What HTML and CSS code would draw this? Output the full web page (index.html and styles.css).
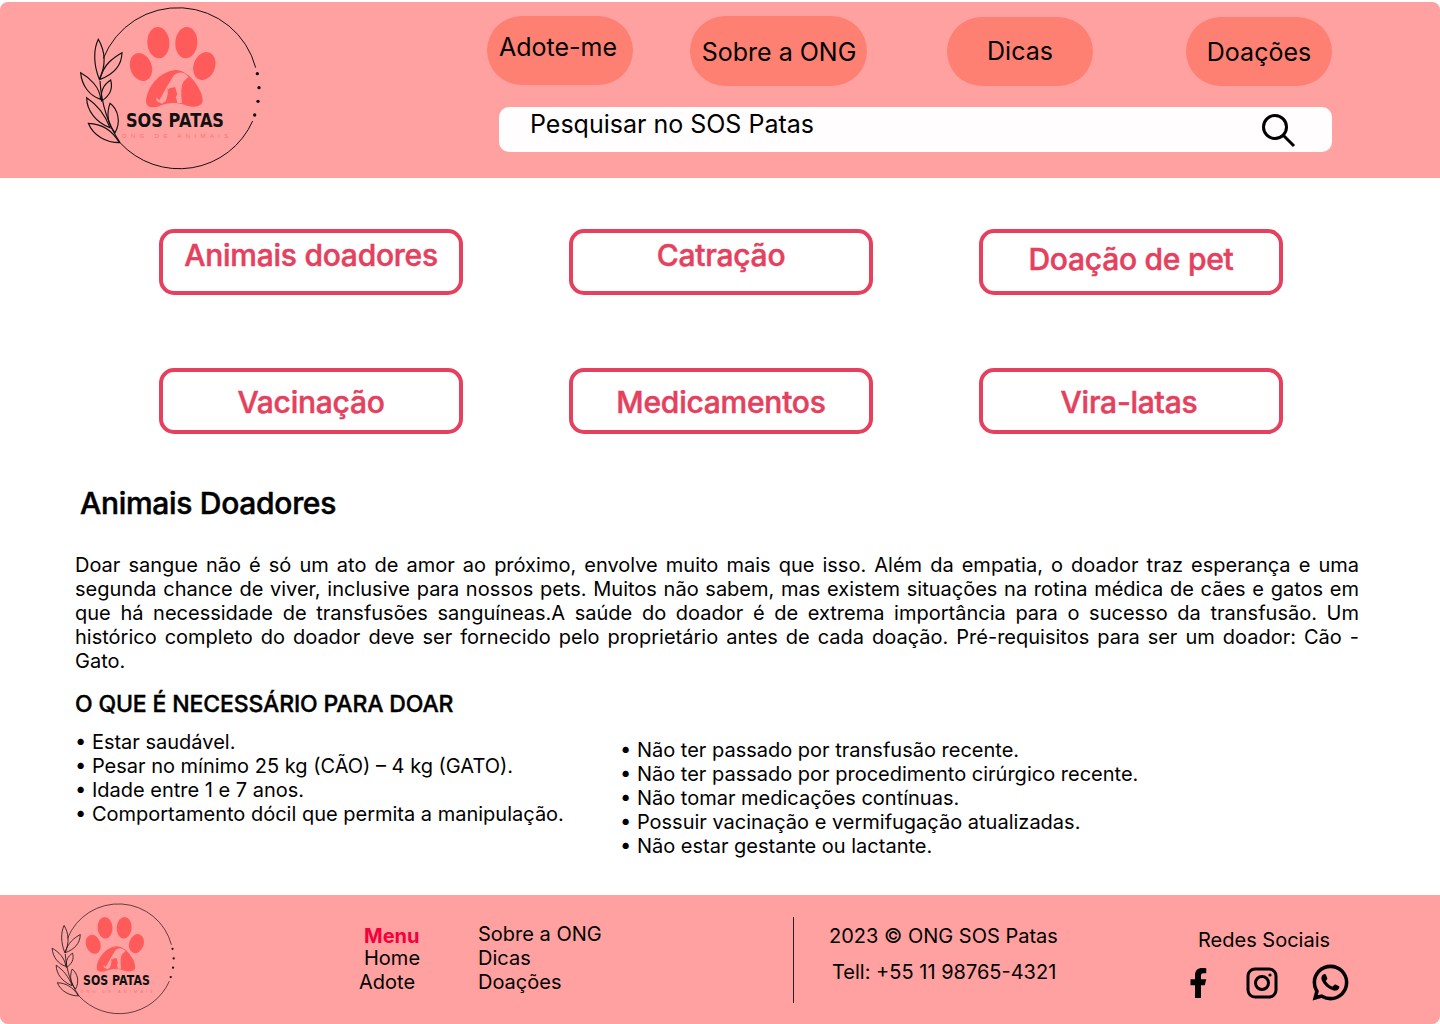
FILE: index.html
```html
<!DOCTYPE html>
<html lang="pt-BR">
<head>
    <meta charset="utf-8">
    <title>SOS Patas</title>
    <link rel="stylesheet" href="styles.css">
</head>
<body>
    <header class="topo">
        <svg class="logo" viewBox="0 3 660 528">
            <g fill="none" stroke="#111" stroke-width="3">
                <path d="M587 200A241 241 0 0 0 130 172"/>
                <path d="M180 425A241 241 0 0 0 578 360"/>
            </g>
            <g fill="#111">
                <circle cx="592" cy="218" r="5"/>
                <circle cx="597" cy="260" r="5"/>
                <circle cx="594" cy="301" r="5"/>
                <circle cx="584" cy="342" r="5"/>
            </g>
            <g fill="none" stroke="#111" stroke-width="3.5">
                <path d="M180 425C150 380 125 320 120 240"/>
                <path d="M118 235C100 190 100 145 115 115C135 150 140 190 118 235Z"/>
                <path d="M120 235C130 190 160 170 186 155C185 195 160 220 120 235Z"/>
                <path d="M125 300C120 270 132 250 152 237C160 265 148 285 125 300Z"/>
                <path d="M122 295C120 260 90 230 62 215C65 255 90 285 122 295Z"/>
                <path d="M150 380C135 340 110 310 80 290C80 330 110 365 150 380Z"/>
                <path d="M165 395C140 365 140 335 150 307C175 325 183 365 165 395Z"/>
                <path d="M178 425C155 385 120 368 85 367C100 405 140 425 178 425Z"/>
            </g>
            <g fill="#ff5b5b">
                <ellipse cx="295" cy="125" rx="33" ry="47" transform="rotate(-4 295 125)"/>
                <ellipse cx="379" cy="125" rx="33" ry="47" transform="rotate(4 379 125)"/>
                <ellipse cx="243" cy="198" rx="32" ry="43" transform="rotate(-20 243 198)"/>
                <ellipse cx="433" cy="195" rx="32" ry="43" transform="rotate(20 433 195)"/>
                <path d="M258 300C262 255 300 212 345 207C385 205 428 265 428 298C428 318 400 322 375 312C350 304 325 304 300 314C278 323 258 320 258 300Z"/>
            </g>
            <path fill="#ffa1a1" d="M336 232C345 212 372 208 385 228L372 240C364 250 362 270 366 306H345L340 300L352 280L345 258L328 262L318 300L305 308L290 300L288 288L298 298L318 262Z"/>
            <path fill="#ff5b5b" d="M322 262L329 268H340L347 262L346 280L352 306H316L324 282Z"/>
            <text class="logo-name" x="198" y="379" textLength="294" lengthAdjust="spacingAndGlyphs">SOS PATAS</text>
            <text class="logo-sub" x="186" y="411" textLength="319">ONG DE ANIMAIS</text>
        </svg>
        <div class="topo-direita">
            <nav class="menu">
                <a class="pill pill-adote" href="#">Adote-me</a>
                <a class="pill pill-sobre" href="#">Sobre a ONG</a>
                <a class="pill pill-dicas" href="#">Dicas</a>
                <a class="pill pill-doacoes" href="#">Doações</a>
            </nav>
            <div class="busca">
                <span>Pesquisar no SOS Patas</span>
                <svg class="busca-icone" width="36" height="36" viewBox="0 0 36 36">
                    <circle cx="15" cy="14" r="11.5" fill="none" stroke="#000" stroke-width="3"/>
                    <path d="M23 22L34 33" stroke="#000" stroke-width="3" fill="none"/>
                </svg>
            </div>
        </div>
    </header>

    <section class="botoes">
        <a class="botao sobe" href="#">Animais doadores</a>
        <a class="botao sobe" href="#">Catração</a>
        <a class="botao meio" href="#">Doação de pet</a>
        <a class="botao desce" href="#">Vacinação</a>
        <a class="botao desce" href="#">Medicamentos</a>
        <a class="botao desce vira" href="#">Vira-latas</a>
    </section>

    <main class="conteudo">
        <h1>Animais Doadores</h1>
        <p class="texto">Doar sangue não é só um ato de amor ao próximo, envolve muito mais que isso. Além da empatia, o doador traz esperança e uma segunda chance de viver, inclusive para nossos pets. Muitos não sabem, mas existem situações na rotina médica de cães e gatos em que há necessidade de transfusões sanguíneas.A saúde do doador é de extrema importância para o sucesso da transfusão. Um histórico completo do doador deve ser fornecido pelo proprietário antes de cada doação. Pré-requisitos para ser um doador: Cão - Gato.</p>
        <h2>O QUE É NECESSÁRIO PARA DOAR</h2>
        <div class="listas">
            <ul class="lista lista-um">
                <li>• Estar saudável.</li>
                <li>• Pesar no mínimo 25 kg (CÃO) – 4 kg (GATO).</li>
                <li>• Idade entre 1 e 7 anos.</li>
                <li>• Comportamento dócil que permita a manipulação.</li>
            </ul>
            <ul class="lista lista-dois">
                <li>• Não ter passado por transfusão recente.</li>
                <li>• Não ter passado por procedimento cirúrgico recente.</li>
                <li>• Não tomar medicações contínuas.</li>
                <li>• Possuir vacinação e vermifugação atualizadas.</li>
                <li>• Não estar gestante ou lactante.</li>
            </ul>
        </div>
    </main>

    <footer class="rodape">
        <svg class="logo-rodape" viewBox="0 3 660 528">
            <g fill="none" stroke="#111" stroke-width="3">
                <path d="M587 200A241 241 0 0 0 130 172"/>
                <path d="M180 425A241 241 0 0 0 578 360"/>
            </g>
            <g fill="#111">
                <circle cx="592" cy="218" r="5"/>
                <circle cx="597" cy="260" r="5"/>
                <circle cx="594" cy="301" r="5"/>
                <circle cx="584" cy="342" r="5"/>
            </g>
            <g fill="none" stroke="#111" stroke-width="3.5">
                <path d="M180 425C150 380 125 320 120 240"/>
                <path d="M118 235C100 190 100 145 115 115C135 150 140 190 118 235Z"/>
                <path d="M120 235C130 190 160 170 186 155C185 195 160 220 120 235Z"/>
                <path d="M125 300C120 270 132 250 152 237C160 265 148 285 125 300Z"/>
                <path d="M122 295C120 260 90 230 62 215C65 255 90 285 122 295Z"/>
                <path d="M150 380C135 340 110 310 80 290C80 330 110 365 150 380Z"/>
                <path d="M165 395C140 365 140 335 150 307C175 325 183 365 165 395Z"/>
                <path d="M178 425C155 385 120 368 85 367C100 405 140 425 178 425Z"/>
            </g>
            <g fill="#ff5b5b">
                <ellipse cx="295" cy="125" rx="33" ry="47" transform="rotate(-4 295 125)"/>
                <ellipse cx="379" cy="125" rx="33" ry="47" transform="rotate(4 379 125)"/>
                <ellipse cx="243" cy="198" rx="32" ry="43" transform="rotate(-20 243 198)"/>
                <ellipse cx="433" cy="195" rx="32" ry="43" transform="rotate(20 433 195)"/>
                <path d="M258 300C262 255 300 212 345 207C385 205 428 265 428 298C428 318 400 322 375 312C350 304 325 304 300 314C278 323 258 320 258 300Z"/>
            </g>
            <path fill="#ffa1a1" d="M336 232C345 212 372 208 385 228L372 240C364 250 362 270 366 306H345L340 300L352 280L345 258L328 262L318 300L305 308L290 300L288 288L298 298L318 262Z"/>
            <path fill="#ff5b5b" d="M322 262L329 268H340L347 262L346 280L352 306H316L324 282Z"/>
            <text class="logo-name" x="198" y="379" textLength="294" lengthAdjust="spacingAndGlyphs">SOS PATAS</text>
            <text class="logo-sub" x="186" y="411" textLength="319">ONG DE ANIMAIS</text>
        </svg>
        <div class="rodape-menu">
            <strong class="menu-titulo">Menu</strong>
            <a class="menu-home" href="#">Home</a>
            <a class="menu-adote" href="#">Adote</a>
        </div>
        <div class="rodape-links">
            <a href="#">Sobre a ONG</a>
            <a href="#">Dicas</a>
            <a href="#">Doações</a>
        </div>
        <div class="divisor"></div>
        <div class="contato">
            <span>2023 © ONG SOS Patas</span>
            <span class="telefone">Tell: +55 11 98765-4321</span>
        </div>
        <div class="redes">
            <span>Redes Sociais</span>
            <div class="redes-icones">
                <svg width="36" height="36" viewBox="0 0 24 24"><path d="M14 13.5h2.5l1-4H14v-2c0-1.03 0-2 2-2h1.5V2.14c-.326-.043-1.557-.14-2.857-.14C11.928 2 10 3.657 10 6.7v2.8H7v4h3V22h4v-8.5z"/></svg>
                <svg width="32" height="32" viewBox="0 0 32 32" fill="none" stroke="#000" stroke-width="3"><rect x="2" y="2" width="28" height="28" rx="7"/><circle cx="16" cy="16" r="6.5"/><circle cx="24" cy="8" r="1.6" fill="#000" stroke="none"/></svg>
                <svg class="icone-zap" width="43" height="43" viewBox="0 0 24 24"><path d="M7.253 18.494l.724.423A7.953 7.953 0 0 0 12 20a8 8 0 1 0-8-8c0 1.436.377 2.813 1.084 4.024l.422.724-.653 2.401 2.4-.655zM2.004 22l1.352-4.968A9.954 9.954 0 0 1 2 12C2 6.477 6.477 2 12 2s10 4.477 10 10-4.477 10-10 10a9.954 9.954 0 0 1-5.03-1.355L2.004 22zM8.391 7.308c.134-.01.269-.01.403-.004.054.004.108.01.162.016.159.018.334.115.393.249.298.676.588 1.357.868 2.04.062.152.025.347-.093.537a4.38 4.38 0 0 1-.263.372c-.113.145-.356.411-.356.411s-.099.118-.061.265c.014.056.06.137.102.205l.059.095c.256.427.6.86 1.02 1.268.12.116.237.235.363.346.468.413.998.75 1.57 1l.005.002c.085.037.128.057.252.11.062.026.126.049.191.066a.35.35 0 0 0 .367-.13c.724-.877.79-.934.796-.934v.002a.482.482 0 0 1 .378-.127c.06.004.121.015.177.04.531.243 1.4.622 1.4.622l.582.261c.098.047.187.158.19.265.004.067.01.175-.013.373-.032.259-.11.57-.188.733a1.155 1.155 0 0 1-.21.302 2.378 2.378 0 0 1-.33.288 3.71 3.71 0 0 1-.125.09 5.024 5.024 0 0 1-.383.22 1.99 1.99 0 0 1-.833.23c-.185.01-.37.024-.556.014-.008 0-.568-.087-.568-.087a9.448 9.448 0 0 1-3.84-2.046c-.226-.199-.435-.413-.649-.626-.89-.885-1.562-1.84-1.97-2.742A3.47 3.47 0 0 1 6.9 9.688a2.68 2.68 0 0 1 .564-1.68c.073-.094.142-.192.261-.305.127-.12.207-.184.294-.228a.961.961 0 0 1 .371-.166z"/></svg>
            </div>
        </div>
    </footer>
</body>
</html>
```

FILE: styles.css
```css
* {
    box-sizing: border-box;
}

body {
    margin: 0;
    padding-top: 2px;
    background-color: #fff;
    color: #000;
    font-family: Inter, "Noto Sans", sans-serif;
    font-size: 20px;
    line-height: 24px;
}

a {
    color: inherit;
    text-decoration: none;
}

.logo-name {
    font-family: "DejaVu Sans", sans-serif;
    font-size: 58px;
    font-weight: bold;
    fill: #111;
}

.logo-sub {
    font-family: "Liberation Sans", sans-serif;
    font-size: 18px;
    fill: #ff6f6f;
}

/* topo */
.topo {
    display: flex;
    height: 176px;
    padding-left: 60px;
    background-color: #ffa1a1;
    border-radius: 8px 8px 0 0;
}

.logo {
    width: 220px;
    height: 176px;
}

.topo-direita {
    margin-left: 207px;
    width: 845px;
}

.menu {
    display: flex;
    height: 105px;
    padding-top: 14px;
    font-size: 25px;
}

.pill {
    display: flex;
    justify-content: center;
    align-items: center;
    width: 146px;
    height: 69px;
    background-color: #fd8073;
    border-radius: 35px;
}

.pill-adote {
    padding: 0 4px 8px 0;
}

.pill-sobre {
    width: 177px;
    height: 70px;
    margin-left: 57px;
    padding: 2px 0 0 1px;
}

.pill-dicas {
    margin-top: 1px;
    margin-left: 80px;
    padding-bottom: 2px;
}

.pill-doacoes {
    margin-top: 1px;
    margin-left: 93px;
}

.busca {
    display: flex;
    justify-content: space-between;
    width: 833px;
    height: 45px;
    margin-left: 12px;
    padding: 2px 36px 0 31px;
    background-color: #fffdfd;
    border-radius: 10px;
    font-size: 25px;
    line-height: 30px;
}

.busca-icone {
    margin-top: 4px;
}

/* botoes */
.botoes {
    display: grid;
    grid-template-columns: repeat(3, 304px);
    column-gap: 106px;
    row-gap: 73px;
    padding: 51px 0 0 159px;
}

.botao {
    display: flex;
    justify-content: center;
    align-items: center;
    height: 66px;
    border: 4px solid #e5405e;
    border-radius: 15px;
    color: #e5405e;
    font-size: 30px;
    font-weight: 500;
    letter-spacing: -0.25px;
    -webkit-text-stroke: 0.5px #e5405e;
}

.sobe {
    padding-bottom: 14px;
}

.meio {
    padding-bottom: 6px;
}

.desce {
    padding-top: 2px;
}

.vira {
    padding-right: 4px;
}

/* conteudo */
.conteudo {
    padding: 0 81px 0 75px;
}

h1 {
    margin: 51px 0 0 5px;
    font-size: 30px;
    line-height: 36px;
    font-weight: 500;
    letter-spacing: -0.3px;
    -webkit-text-stroke: 0.5px #000;
}

.texto {
    margin: 32px 0 0;
    text-align: justify;
}

h2 {
    margin: 16px 0 0;
    font-size: 23px;
    line-height: 30px;
    font-weight: 500;
    letter-spacing: -0.15px;
    -webkit-text-stroke: 0.4px #000;
}

.listas {
    display: flex;
    margin-top: 11px;
}

.lista {
    margin: 0;
    padding: 0;
    list-style: none;
}

.lista-um {
    width: 545px;
}

.lista-dois {
    margin-top: 8px;
}

/* rodape */
.rodape {
    position: absolute;
    top: 895px;
    left: 0;
    display: flex;
    width: 1440px;
    height: 129px;
    padding-left: 38px;
    background-color: #ffa1a1;
    border-radius: 0 0 8px 8px;
}

.logo-rodape {
    width: 150px;
    height: 120px;
    margin-top: 5px;
}

.rodape-menu,
.rodape-links,
.contato,
.redes {
    display: flex;
    flex-direction: column;
}

.rodape-menu {
    width: 118px;
    margin-left: 172px;
    padding-top: 31px;
}

.menu-titulo {
    padding-left: 4px;
    color: #f5003c;
    line-height: 20px;
}

.menu-home {
    padding-left: 4px;
}

.menu-adote {
    margin-left: -1px;
}

.rodape-links {
    width: 315px;
    padding-top: 27px;
}

.divisor {
    width: 1px;
    height: 86px;
    margin-top: 22px;
    background-color: #222;
}

.contato {
    width: 369px;
    margin-left: 35px;
    padding-top: 29px;
}

.telefone {
    margin-top: 12px;
    padding-left: 3px;
}

.redes {
    padding-top: 33px;
}

.redes-icones {
    display: flex;
    align-items: center;
    gap: 30px;
    margin: 9px 0 0 -18px;
}

.icone-zap {
    margin-left: 1px;
}
```
